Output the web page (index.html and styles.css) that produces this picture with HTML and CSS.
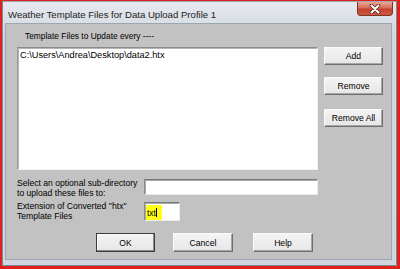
FILE: index.html
```html
<!DOCTYPE html>
<html>
<head>
<meta charset="utf-8">
<link rel="stylesheet" href="styles.css">
</head>
<body>
<div class="window">
  <div class="titlebar">
    <span class="title">Weather Template Files for Data Upload Profile 1</span>
    <div class="close">
      <svg width="14" height="10" viewBox="0 0 14 10">
        <path d="M3.5 1.5 L10.5 8.5 M10.5 1.5 L3.5 8.5" stroke="#5a2a24" stroke-width="3.6" stroke-linecap="round"/>
        <path d="M3.5 1.5 L10.5 8.5 M10.5 1.5 L3.5 8.5" stroke="#ffffff" stroke-width="2" stroke-linecap="round"/>
      </svg>
    </div>
  </div>
  <div class="client">
    <div class="list-label">Template Files to Update every ----</div>
    <div class="main-row">
      <div class="listbox">
        <div class="list-item">C:\Users\Andrea\Desktop\data2.htx</div>
      </div>
      <div class="side-buttons">
        <div class="btn btn-side">Add</div>
        <div class="btn btn-side btn-remove">Remove</div>
        <div class="btn btn-side btn-removeall">Remove All</div>
      </div>
    </div>
    <div class="field-row row-subdir">
      <div class="field-label">Select an optional sub-directory<br>to upload these files to:</div>
      <div class="textbox textbox-subdir"></div>
    </div>
    <div class="field-row row-ext">
      <div class="field-label">Extension of Converted ''htx''<br>Template Files</div>
      <div class="textbox textbox-ext"><span class="hl">txt<span class="caret"></span></span></div>
    </div>
    <div class="bottom-buttons">
      <div class="btn btn-bottom btn-default">OK</div>
      <div class="btn btn-bottom btn-cancel">Cancel</div>
      <div class="btn btn-bottom btn-help">Help</div>
    </div>
  </div>
</div>
</body>
</html>
```

FILE: styles.css
```css
html, body {
  margin: 0;
  padding: 0;
}
body {
  width: 400px;
  height: 269px;
  background: #e0201c;
  overflow: hidden;
  padding: 1px 0 0 2px;
  box-sizing: border-box;
  font-family: "Liberation Sans", Arial, sans-serif;
}
.window {
  width: 395px;
  height: 265px;
  box-sizing: border-box;
  background: linear-gradient(#dfe3e9, #d2d8e0 12%, #d0d6de);
  border: 1px solid #7c8896;
  border-top-color: #9aa5b2;
  padding: 0 4px 5px 2px;
  display: flex;
  flex-direction: column;
}
.titlebar {
  height: 21px;
  display: flex;
  align-items: flex-start;
  background: linear-gradient(#e6e9ee, #dadee5);
  margin: 0 -4px 0 -2px;
  padding: 0 3px 0 5px;
}
.title {
  font-size: 9.6px;
  color: #1c1c1c;
  line-height: 11px;
  margin-top: 7px;
  white-space: nowrap;
}
.close {
  margin-left: auto;
  width: 36px;
  height: 14px;
  box-sizing: border-box;
  border: 1px solid #7d3428;
  border-top: none;
  border-radius: 0 0 4px 4px;
  background: linear-gradient(#e9a898, #d66a56 45%, #c2412c 55%, #cf5a40);
  display: flex;
  align-items: center;
  justify-content: center;
}
.close svg {
  display: block;
}
.client {
  flex: 1;
  background: #c2c2c2;
  border: 1px solid #9ca6b2;
  box-sizing: border-box;
  padding: 7px 0 0 11px;
  display: flex;
  flex-direction: column;
  font-size: 8.6px;
  color: #000;
}
.list-label {
  margin-left: 8px;
  line-height: 10px;
  height: 10px;
  font-size: 8.4px;
}
.main-row {
  display: flex;
  margin-top: 6px;
}
.listbox {
  width: 301px;
  height: 123px;
  box-sizing: border-box;
  background: #fff;
  border: 1px solid;
  border-color: #8a8a8a #f2f2f2 #f2f2f2 #9a9a9a;
  box-shadow: inset 1px 1px #b4b4b4;
  padding: 2px 0 0 2px;
}
.list-item {
  font-size: 9.2px;
  line-height: 11px;
}
.side-buttons {
  margin-left: 6px;
  display: flex;
  flex-direction: column;
}
.btn {
  box-sizing: border-box;
  border: 1px solid;
  border-color: #fafafa #6e6e6e #6e6e6e #fafafa;
  box-shadow: inset -1px -1px #a6a6a6;
  background: linear-gradient(#f4f4f4, #e6e6e6);
  display: flex;
  align-items: center;
  justify-content: center;
  font-size: 8.6px;
  line-height: 10px;
  color: #000;
}
.btn-side {
  width: 59px;
  height: 18px;
}
.btn-remove {
  margin-top: 12px;
}
.btn-removeall {
  margin-top: 14px;
}
.field-row {
  display: flex;
  align-items: flex-start;
}
.row-subdir {
  margin-top: 8px;
}
.row-ext {
  margin-top: 3px;
}
.field-label {
  width: 127px;
  line-height: 10px;
  font-size: 8.6px;
}
.textbox {
  box-sizing: border-box;
  background: #fff;
  border: 1px solid;
  border-color: #787878 #ececec #ececec #8c8c8c;
  box-shadow: inset 1px 1px #a8a8a8;
  margin-top: 1px;
}
.textbox-subdir {
  width: 174px;
  height: 16px;
}
.textbox-ext {
  width: 36px;
  height: 19px;
  display: flex;
  align-items: flex-start;
  padding: 1px 0 0 1px;
}
.hl {
  display: flex;
  align-items: center;
  background: #ffff1a;
  font-size: 8.4px;
  line-height: 10px;
  height: 15px;
  padding: 0 5px 0 1px;
  margin-top: 1px;
}
.caret {
  display: block;
  width: 1px;
  height: 9px;
  background: #000;
  margin-left: 0;
}
.bottom-buttons {
  display: flex;
  margin-top: 12px;
  margin-left: 79px;
}
.btn-bottom {
  width: 59px;
  height: 19px;
}
.btn-default {
  border: 1px solid #3c3c3c;
  box-shadow: inset -1px -1px #8a8a8a, inset 1px 1px #fafafa;
}
.btn-cancel {
  margin-left: 18px;
  width: 60px;
}
.btn-help {
  margin-left: 20px;
  width: 60px;
}
```
